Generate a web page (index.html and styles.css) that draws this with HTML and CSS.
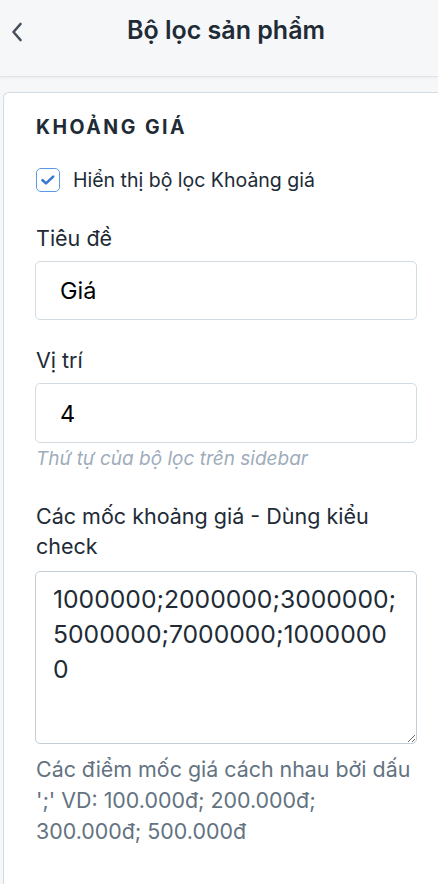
FILE: index.html
```html
<!DOCTYPE html>
<html lang="vi">
<head>
<meta charset="utf-8">
<title>Bộ lọc sản phẩm</title>
<link rel="stylesheet" href="styles.css">
</head>
<body>
<div class="app">
<header class="topbar">
  <button class="back" aria-label="Quay lại">
    <svg width="14" height="22" viewBox="0 0 14 22"><path d="M10.5 3 L3.5 11 L10.5 19" fill="none" stroke="#454f5b" stroke-width="2.6" stroke-linecap="round" stroke-linejoin="round"/></svg>
  </button>
  <h1 class="title">Bộ lọc sản phẩm</h1>
</header>
<main class="page">
  <section class="card">
    <h2 class="section-title">KHOẢNG GIÁ</h2>
    <label class="check-row">
      <span class="checkbox">
        <svg width="16" height="12" viewBox="0 0 16 12"><path d="M2.5 6.2 L6 9.4 L13.2 2.6" fill="none" stroke="#3a78cf" stroke-width="2.6" stroke-linecap="round" stroke-linejoin="round"/></svg>
      </span>
      <span class="check-label">Hiển thị bộ lọc Khoảng giá</span>
    </label>

    <div class="field field-first">
      <div class="label">Tiêu đề</div>
      <div class="input">Giá</div>
    </div>

    <div class="field field-second">
      <div class="label">Vị trí</div>
      <div class="input">4</div>
      <div class="hint">Thứ tự của bộ lọc trên sidebar</div>
    </div>

    <div class="field field-third">
      <div class="label label-wrap">Các mốc khoảng giá - Dùng kiểu check</div>
      <textarea class="textarea">1000000;2000000;3000000;5000000;7000000;10000000</textarea>
      <div class="help">Các điểm mốc giá cách nhau bởi dấu ';' VD: 100.000đ; 200.000đ; 300.000đ; 500.000đ</div>
    </div>
  </section>
</main>
</div>
</body>
</html>
```

FILE: styles.css
```css
html, body {
  margin: 0;
  padding: 0;
}
body {
  background: #f6f7f9;
  font-family: Inter, "Noto Sans", "Liberation Sans", sans-serif;
  color: #212b36;
}
.app {
  height: 884px;
  overflow: hidden;
}
.topbar {
  height: 76px;
  display: flex;
  align-items: center;
  justify-content: center;
  background: #f6f7f9;
  border-bottom: 1px solid #dfe3e8;
  box-shadow: 0 1px 3px rgba(33, 43, 54, 0.06);
  position: relative;
}
.back {
  position: absolute;
  left: 10px;
  top: 20px;
  background: none;
  border: 0;
  padding: 0;
  width: 16px;
  height: 24px;
  display: flex;
  align-items: center;
}
.title {
  margin: -16px 0 0 14px;
  font-size: 25px;
  font-weight: 600;
  color: #212b36;
}
.page {
  padding: 15px 0 0 3px;
}
.card {
  background: #fff;
  border: 1px solid #d3dbe3;
  border-right: 0;
  border-radius: 6px 0 0 0;
  margin-right: -20px;
  padding: 23px 41px 80px 31px;
}
.section-title {
  margin: 0 0 0 1px;
  font-size: 19.5px;
  line-height: 22px;
  font-weight: 700;
  letter-spacing: 2.5px;
  color: #212b36;
}
.check-row {
  margin-top: 29px;
  display: flex;
  align-items: center;
  gap: 13px;
  height: 26px;
}
.checkbox {
  width: 24px;
  height: 24px;
  border: 1px solid #5b9ae8;
  border-radius: 5px;
  display: flex;
  align-items: center;
  justify-content: center;
  box-sizing: border-box;
  margin-left: 1px;
}
.check-label {
  font-size: 19.5px;
  color: #212b36;
}
.field-first { margin-top: 32px; }
.field-second { margin-top: 27px; }
.field-third { margin-top: 31px; }
.label {
  font-size: 21.5px;
  line-height: 26px;
  margin: 0 0 10px 1px;
  color: #212b36;
}
.label-wrap {
  line-height: 30px;
  padding-right: 10px;
}
.input {
  height: 59px;
  box-sizing: border-box;
  border: 1px solid #d3dbe3;
  border-radius: 5px;
  padding: 0 24px;
  display: flex;
  align-items: center;
  font-size: 23.5px;
  color: #000;
}
.field-second .input {
  height: 60px;
}
.hint {
  margin: 5px 0 0 1px;
  font-size: 19px;
  line-height: 22px;
  font-style: italic;
  color: #9eacbb;
}
.textarea {
  display: block;
  width: 100%;
  height: 173px;
  box-sizing: border-box;
  border: 1px solid #c4cdd6;
  border-radius: 5px;
  padding: 10px 18px 0 17px;
  font-family: Inter, "Noto Sans", "Liberation Sans", sans-serif;
  font-size: 24.7px;
  line-height: 35px;
  color: #212b36;
  resize: vertical;
  overflow: hidden;
  word-break: break-all;
  background: #fff;
}
.help {
  margin: 10px 0 0 1px;
  padding-right: 3px;
  font-size: 21.4px;
  line-height: 31px;
  color: #637381;
}
```
